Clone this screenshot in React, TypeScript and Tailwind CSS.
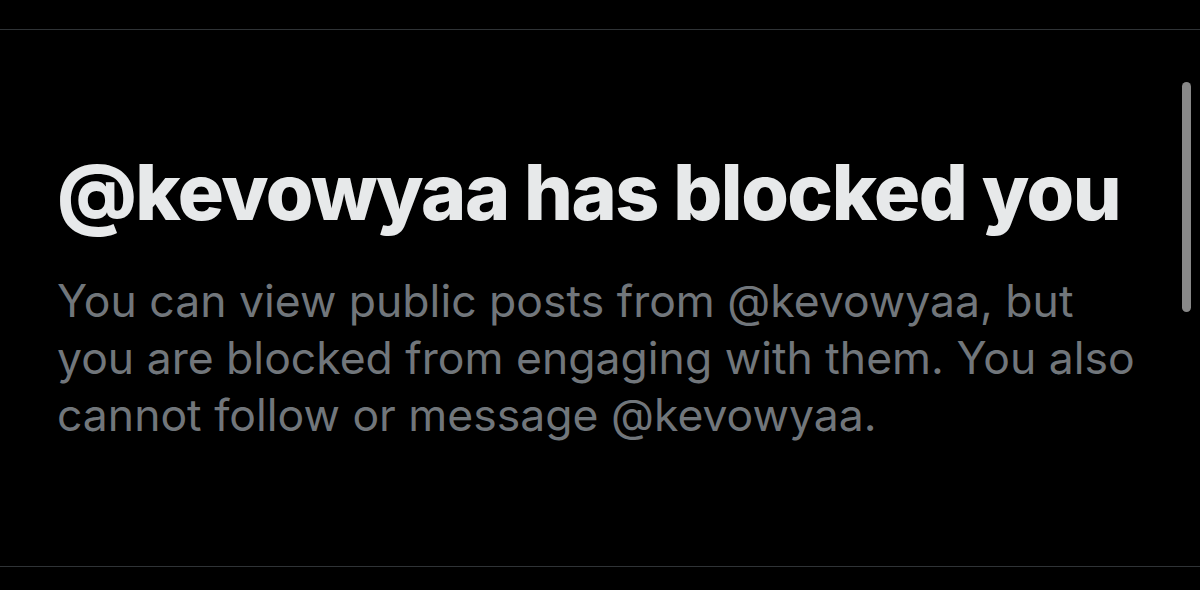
import React from 'react';

const App: React.FC = () => {
  return (
    <div className="relative h-[590px] w-[1200px] overflow-hidden bg-black font-['Inter','Liberation_Sans',sans-serif]">
      <div className="h-[29px]" />
      <div className="flex h-[538px] flex-col border-y border-[#2f3336] pl-[57px] pt-[124px]">
        {/* header */}
        <h1 className="text-[77px] font-extrabold leading-none tracking-[-1.5px] text-[#e7e9ea]">
          @kevowyaa has blocked you
        </h1>
        <p className="mt-[42px] text-[44.5px] leading-[57px] text-[#71767b]">
          You can view public posts from @kevowyaa, but
          <br />
          you are blocked from engaging with them. You also
          <br />
          cannot follow or message @kevowyaa.
        </p>
      </div>

      {/* scrollbar */}
      <div className="absolute left-[1182px] top-[82px] h-[230px] w-[9px] rounded-full bg-[#888888]" />
    </div>
  );
};

export default App;
